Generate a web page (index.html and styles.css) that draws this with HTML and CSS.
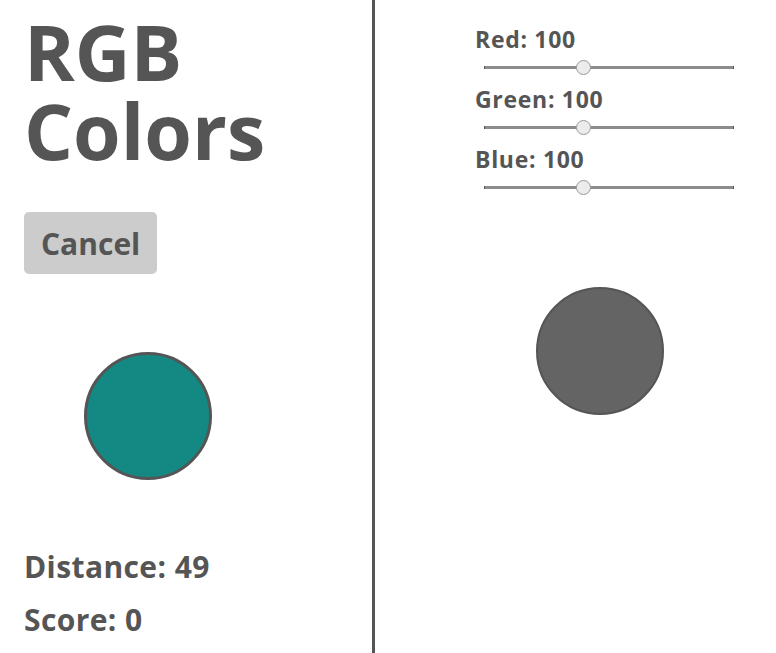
FILE: index.html
```html
<!DOCTYPE html>
<html lang="en">
<head>
<meta charset="utf-8">
<title>RGB Colors</title>
<link rel="stylesheet" href="styles.css">
</head>
<body>
<div class="app">
  <section class="left">
    <h1 class="title">RGB<br>Colors</h1>
    <button class="cancel" type="button">Cancel</button>
    <div class="swatch swatch-target"></div>
    <p class="stat stat-distance">Distance: 49</p>
    <p class="stat stat-score">Score: 0</p>
  </section>
  <section class="right">
    <div class="sliders">
      <label class="slider">
        <span class="slider-label">Red: 100</span>
        <input class="range" type="range" min="0" max="255" value="100">
      </label>
      <label class="slider">
        <span class="slider-label">Green: 100</span>
        <input class="range" type="range" min="0" max="255" value="100">
      </label>
      <label class="slider">
        <span class="slider-label">Blue: 100</span>
        <input class="range" type="range" min="0" max="255" value="100">
      </label>
    </div>
    <div class="swatch swatch-guess"></div>
  </section>
</div>
</body>
</html>
```
FILE: styles.css
```css
html, body {
  margin: 0;
  padding: 0;
  background: #fff;
}

body {
  font-family: "Open Sans", "Noto Sans", sans-serif;
  font-weight: 700;
  color: #555;
}

.app {
  display: flex;
  height: 653px;
}

.left {
  width: 375px;
  border-right: 3px solid #555;
  padding-left: 24px;
  box-sizing: border-box;
  display: flex;
  flex-direction: column;
  align-items: flex-start;
  flex-shrink: 0;
}

.title {
  margin: 12px 0 0;
  font-size: 77px;
  line-height: 79px;
  font-weight: 700;
}

.cancel {
  margin-top: 42px;
  height: 62px;
  padding: 0 17px;
  border: none;
  border-radius: 5px;
  background: #ccc;
  color: #555;
  font-family: inherit;
  font-weight: 700;
  font-size: 30px;
}

.swatch {
  width: 128px;
  height: 128px;
  border-radius: 50%;
  border: 3px solid #555;
  box-sizing: border-box;
  flex-shrink: 0;
}

.swatch-target {
  margin: 78px 0 0 60px;
  background: rgb(20, 136, 130);
}

.stat {
  margin: 0;
  font-size: 30px;
  line-height: 33px;
  letter-spacing: 0.4px;
}

.stat-distance {
  margin-top: 70px;
}

.stat-score {
  margin-top: 20px;
}

.right {
  flex: 1;
  display: flex;
  flex-direction: column;
  align-items: flex-start;
  padding-left: 100px;
}

.sliders {
  display: flex;
  flex-direction: column;
  margin-top: 26px;
  gap: 12px;
}

.slider {
  display: flex;
  flex-direction: column;
  align-items: flex-start;
  gap: 8px;
}

.slider-label {
  font-size: 23px;
  line-height: 26px;
  letter-spacing: 0.7px;
}

.range {
  -webkit-appearance: none;
  appearance: none;
  width: 250px;
  height: 14px;
  margin: 0 0 0 9px;
  padding: 0;
  background: transparent;
}

.range::-webkit-slider-runnable-track {
  height: 3px;
  background: #8c8c8c;
  border-left: 1px solid #555;
  border-right: 1px solid #555;
}

.range::-webkit-slider-thumb {
  -webkit-appearance: none;
  appearance: none;
  width: 15px;
  height: 15px;
  margin-top: -6px;
  border-radius: 50%;
  background: #ececec;
  border: 1px solid #999;
  box-sizing: border-box;
}

.swatch-guess {
  margin: 93px 0 0 61px;
  border-width: 2px;
  background: rgb(100, 100, 100);
}
```
